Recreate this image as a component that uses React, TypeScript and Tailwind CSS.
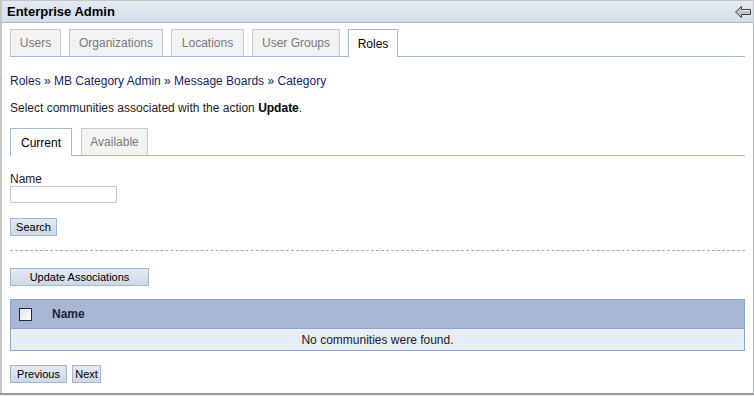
import React from "react";

const font = { fontFamily: '"Liberation Sans", Arial, sans-serif' };

function Tab({ label, active, w }: { label: string; active?: boolean; w: string }) {
  return active ? (
    <div
      className={`${w} h-[28px] -mb-px bg-white border border-b-0 border-[#a6b8d8] text-[12px] text-black flex items-center justify-center`}
    >
      {label}
    </div>
  ) : (
    <div
      className={`${w} h-[27px] bg-[#f2f2f2] border border-b-0 border-[#cacaca] text-[12px] text-[#7a7a7a] flex items-center justify-center`}
    >
      {label}
    </div>
  );
}

function Btn({ children, w }: { children: React.ReactNode; w: string }) {
  return (
    <button
      className={`${w} h-[18px] border border-[#a7b5cf] bg-gradient-to-b from-[#e4eaf2] to-[#cdd8e6] text-[11px] text-black leading-none flex items-center justify-center`}
    >
      {children}
    </button>
  );
}

export default function App() {
  return (
    <div style={font} className="w-[754px] h-[396px] bg-white relative overflow-hidden">
      <div className="w-[754px] h-[393px] flex flex-col border-l-2 border-t border-r border-[#c6c6c6] shadow-[0_2px_1px_#9a9a9a]">
        {/* header */}
        <div className="h-[22px] shrink-0 flex items-center justify-between pl-[5px] pr-[2px] bg-gradient-to-b from-[#e3e9f2] to-[#d3dde9] border-b border-[#a9b7d0]">
          <span className="text-[13px] font-bold text-black">Enterprise Admin</span>
          <svg width="16" height="12" viewBox="0 0 16 12">
            <path
              d="M0.5 6 L6.5 0.5 L6.5 3.5 L15.5 3.5 L15.5 8.5 L6.5 8.5 L6.5 11.5 Z"
              fill="#c4c4c4"
              stroke="#444"
              strokeWidth="1"
            />
            <path d="M6.5 4.5 L15 4.5" stroke="#eee" strokeWidth="1" />
          </svg>
        </div>
        {/* content */}
        <div className="flex-1 flex flex-col pl-[8px] pr-[8px] border-r border-[#a9b7d0] -mr-px">
          <div className="mt-[6px] flex items-end gap-[8px] border-b border-[#a6b8d8] h-[28px]">
            <Tab label="Users" w="w-[51px]" />
            <Tab label="Organizations" w="w-[94px]" />
            <Tab label="Locations" w="w-[73px]" />
            <Tab label="User Groups" w="w-[88px]" />
            <Tab label="Roles" w="w-[50px]" active />
          </div>

          <div className="mt-[17px] text-[12px] text-[#201c6b] leading-[14px]">
            Roles » MB Category Admin » Message Boards » Category
          </div>
          <div className="mt-[13px] text-[12px] text-[#222] leading-[14px]">
            Select communities associated with the action <b className="text-black">Update</b>.
          </div>

          <div className="mt-[13px] flex items-end gap-[9px] border-b border-[#a6b8d8] h-[28px]">
            <Tab label="Current" w="w-[62px]" active />
            <Tab label="Available" w="w-[67px]" />
          </div>

          <div className="mt-[16px] text-[12px] text-[#222] leading-[14px]">Name</div>
          <input className="mt-0 w-[107px] h-[17px] border border-[#c8c8c8] bg-white outline-none" />

          <div className="mt-[15px]">
            <Btn w="w-[47px]">Search</Btn>
          </div>

          <div className="mt-[14px] border-t border-dashed border-[#8fb0da]" />

          <div className="mt-[17px]">
            <Btn w="w-[139px]">Update Associations</Btn>
          </div>

          <div className="mt-[13px] border border-[#8fa6c8]">
            <div className="h-[29px] bg-[#a9b6d2] border-b border-[#8fa6c8] flex items-center">
              <div className="ml-[8px] w-[13px] h-[13px] border border-[#1c2a4a] bg-gradient-to-br from-[#dfe3e8] to-white" />
              <span className="ml-[20px] text-[12px] font-bold text-[#1b2540]">Name</span>
            </div>
            <div className="h-[21px] bg-[#e6edf5] flex items-center justify-center text-[12px] text-[#222]">
              No communities were found.
            </div>
          </div>

          <div className="mt-[14px] flex gap-[5px]">
            <Btn w="w-[57px]">Previous</Btn>
            <Btn w="w-[29px]">Next</Btn>
          </div>
        </div>
      </div>
    </div>
  );
}
